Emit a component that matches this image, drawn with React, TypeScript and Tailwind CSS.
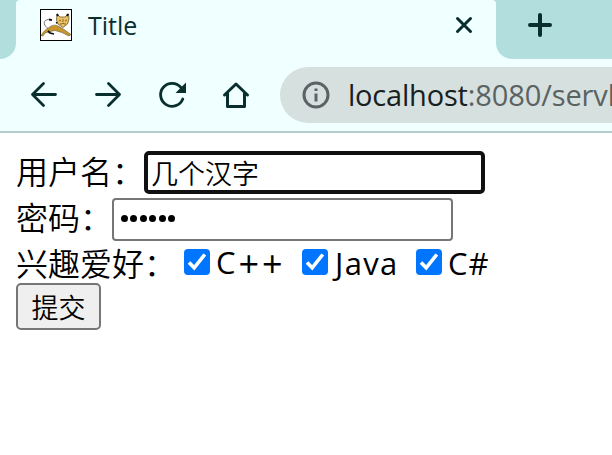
import React from "react";

const ui = "font-['Open_Sans','Noto_Sans_CJK_SC',sans-serif]";
const cjk = "font-['Noto_Sans_CJK_SC',sans-serif] font-[350]";

function TomcatIcon() {
  return (
    <svg width="32" height="32" viewBox="0 0 32 32" className="shrink-0">
      <rect x="0.5" y="0.5" width="31" height="31" fill="#fff" stroke="#000" />
      <path d="M9 20C5 18 3 14 5 12C7 10 10 10 12 11" fill="none" stroke="#777" strokeWidth="1" />
      <path d="M9 10.5l3 .7" stroke="#111" strokeWidth="1.8" />
      <path d="M1 26.500C3 23 6 20 9 18.500C12 16 15 15.500 18 17L24 20.500L31 25.500L29 27L22 23.500L15 21.500L10 22.500L5 24L3 27Z" fill="#c8962f" stroke="#6b5a35" strokeWidth=".6" />
      <path d="M8 22L10 24L14 25M16 14l3-1" fill="none" stroke="#111" strokeWidth="1.8" />
      <path d="M17 5L20 8L25 8L28.500 5L29 10L27.500 15L23 18.500L18 15L16.500 11Z" fill="#eac060" stroke="#6b5a35" strokeWidth=".8" />
      <path d="M17 5l1 2M28 5l-1 2" stroke="#111" strokeWidth="2" />
      <path d="M19 11l2 1M25 12l2-1M20 15h2l1-1 1 1h2M23 10v3" fill="none" stroke="#8a6a2c" strokeWidth="1" />
    </svg>
  );
}

function Check({ label, width, className }: { label: React.ReactNode; width: string; className: string }) {
  return (
    <label className={`flex items-center ${width}`}>
      <span className="flex h-[26px] w-[26px] shrink-0 items-center justify-center rounded-[4px] bg-[#0075ff]">
        <svg width="26" height="26" viewBox="0 0 26 26" fill="none" stroke="#fff" strokeWidth="3.6">
          <path d="M5 13.500L10.200 18.800L20.800 5.500" />
        </svg>
      </span>
      <span className={`whitespace-nowrap pt-px leading-[42px] ${className}`}>{label}</span>
    </label>
  );
}

export default function App() {
  return (
    <div className={`h-[455px] w-[612px] overflow-hidden bg-white text-black ${ui}`}>
      <header className="h-[133px] border-b-2 border-[#b7cece] bg-[#f0ffff] text-[#082f2d]">
        <div className="flex h-[59px] bg-[linear-gradient(#b2dfdd_50%,#f0ffff_50%)]">
          <div className="w-4 rounded-br-[16px] bg-[#b2dfdd]" />
          <div className="flex h-[59px] w-[480px] items-center rounded-t-[4px] bg-[#f0ffff] pb-[9px] pl-6">
            <TomcatIcon />
            <span className="ml-4 mt-[2px] w-[360px] text-[25px]">Title</span>
            <svg width="18" height="18" viewBox="0 0 18 18" className="ml-[7px]" stroke="currentColor" strokeWidth="3" strokeLinecap="round">
              <path d="M2.500 2.500L15.500 15.500M15.500 2.500L2.500 15.500" />
            </svg>
          </div>
          <div className="grow rounded-bl-[16px] bg-[#b2dfdd] pl-8 pt-[13px]">
            <svg width="24" height="24" viewBox="0 0 24 24" stroke="currentColor" strokeWidth="4" strokeLinecap="round">
              <path d="M12 2V22M2 12H22" />
            </svg>
          </div>
        </div>
        <div className="flex h-[72px] items-center pl-7">
          <svg width="32" height="32" viewBox="0 0 32 32" fill="none" stroke="currentColor" strokeWidth="2.800" strokeLinecap="round" strokeLinejoin="round">
            <path d="M27.500 15.500H4.500M15.500 4.500L4.500 15.500L15.500 26.500" />
          </svg>
          <svg width="32" height="32" viewBox="0 0 32 32" className="ml-8" fill="none" stroke="currentColor" strokeWidth="2.800" strokeLinecap="round" strokeLinejoin="round">
            <path d="M4.500 15.500H27.500M16.500 4.500L27.500 15.500L16.500 26.500" />
          </svg>
          <svg width="32" height="32" viewBox="0 0 32 32" className="ml-8" fill="none" stroke="currentColor" strokeWidth="2.800" strokeLinecap="round">
            <path d="M26.800 20A11.500 11.500 0 1 1 25 8.500" />
            <path d="M30 3.500V14H19.500Z" fill="currentColor" stroke="none" />
          </svg>
          <svg width="32" height="32" viewBox="0 0 32 32" className="ml-8" fill="none" stroke="currentColor" strokeWidth="3" strokeLinecap="round" strokeLinejoin="round">
            <path d="M7.500 14V27.500H24.500V14M4.500 16L16 5L27.500 16" />
          </svg>
          <div className="ml-7 flex h-14 grow items-center overflow-hidden rounded-l-full bg-[#d5e0df] pl-[22px]">
            <svg width="28" height="28" viewBox="0 0 28 28" className="shrink-0" fill="none" stroke="#5d6265">
              <circle cx="14" cy="14" r="12" strokeWidth="3" />
              <path d="M14 12.500V20.500M14 7.500V10" strokeWidth="3" />
            </svg>
            <span className="ml-[18px] w-0 whitespace-nowrap text-[29px] tracking-[-0.1px] text-[#5b6262]">
              <span className="tracking-[-0.2px] text-[#18201f]">localhost</span>:8080/servl
            </span>
          </div>
        </div>
      </header>
      <form className="px-4 pt-[18px] text-[32px]">
        <div className="flex h-[43px] items-center">
          <span className={`w-32 shrink-0 whitespace-nowrap pb-[6px] leading-[42px] ${cjk}`}>用户名：</span>
          <div className={`flex h-[43px] w-[341px] items-center rounded-[5px] border-4 border-[#101010] pl-[3px] pt-px text-[27px] ${cjk}`}>几个汉字</div>
        </div>
        <div className="mt-1 flex h-[43px] items-center">
          <span className={`w-24 shrink-0 whitespace-nowrap pb-[8px] leading-[42px] ${cjk}`}>密码：</span>
          <div className="flex h-[43px] w-[341px] items-center gap-[2.400px] rounded-[4px] border-2 border-[#767676] pb-[2px] pl-[7px]">
            {[0, 1, 2, 3, 4, 5].map((i) => (
              <span key={i} className="h-[7px] w-[7px] rounded-full bg-black" />
            ))}
          </div>
        </div>
        <div className="flex h-[42px] items-center">
          <span className={`w-[168px] shrink-0 whitespace-nowrap leading-[42px] ${cjk}`}>兴趣爱好：</span>
          <Check
            label={<span className="flex"><span>C</span><span className="ml-[3px] pt-[2px] text-[36px] tracking-[3px]">++</span></span>}
            width="w-[118px]"
            className="ml-[6px] text-[31px]"
          />
          <Check label="Java" width="w-[114px]" className="ml-[7px] text-[31px] tracking-[1.3px]" />
          <Check label="C#" width="w-20" className="ml-[6px] text-[31px] tracking-[1px]" />
        </div>
        <button type="button" className={`flex h-[47px] w-[85px] items-center justify-center rounded-[5px] border-2 border-[#767676] bg-[#efefef] pt-px text-[27px] ${cjk}`}>提交</button>
      </form>
    </div>
  );
}
